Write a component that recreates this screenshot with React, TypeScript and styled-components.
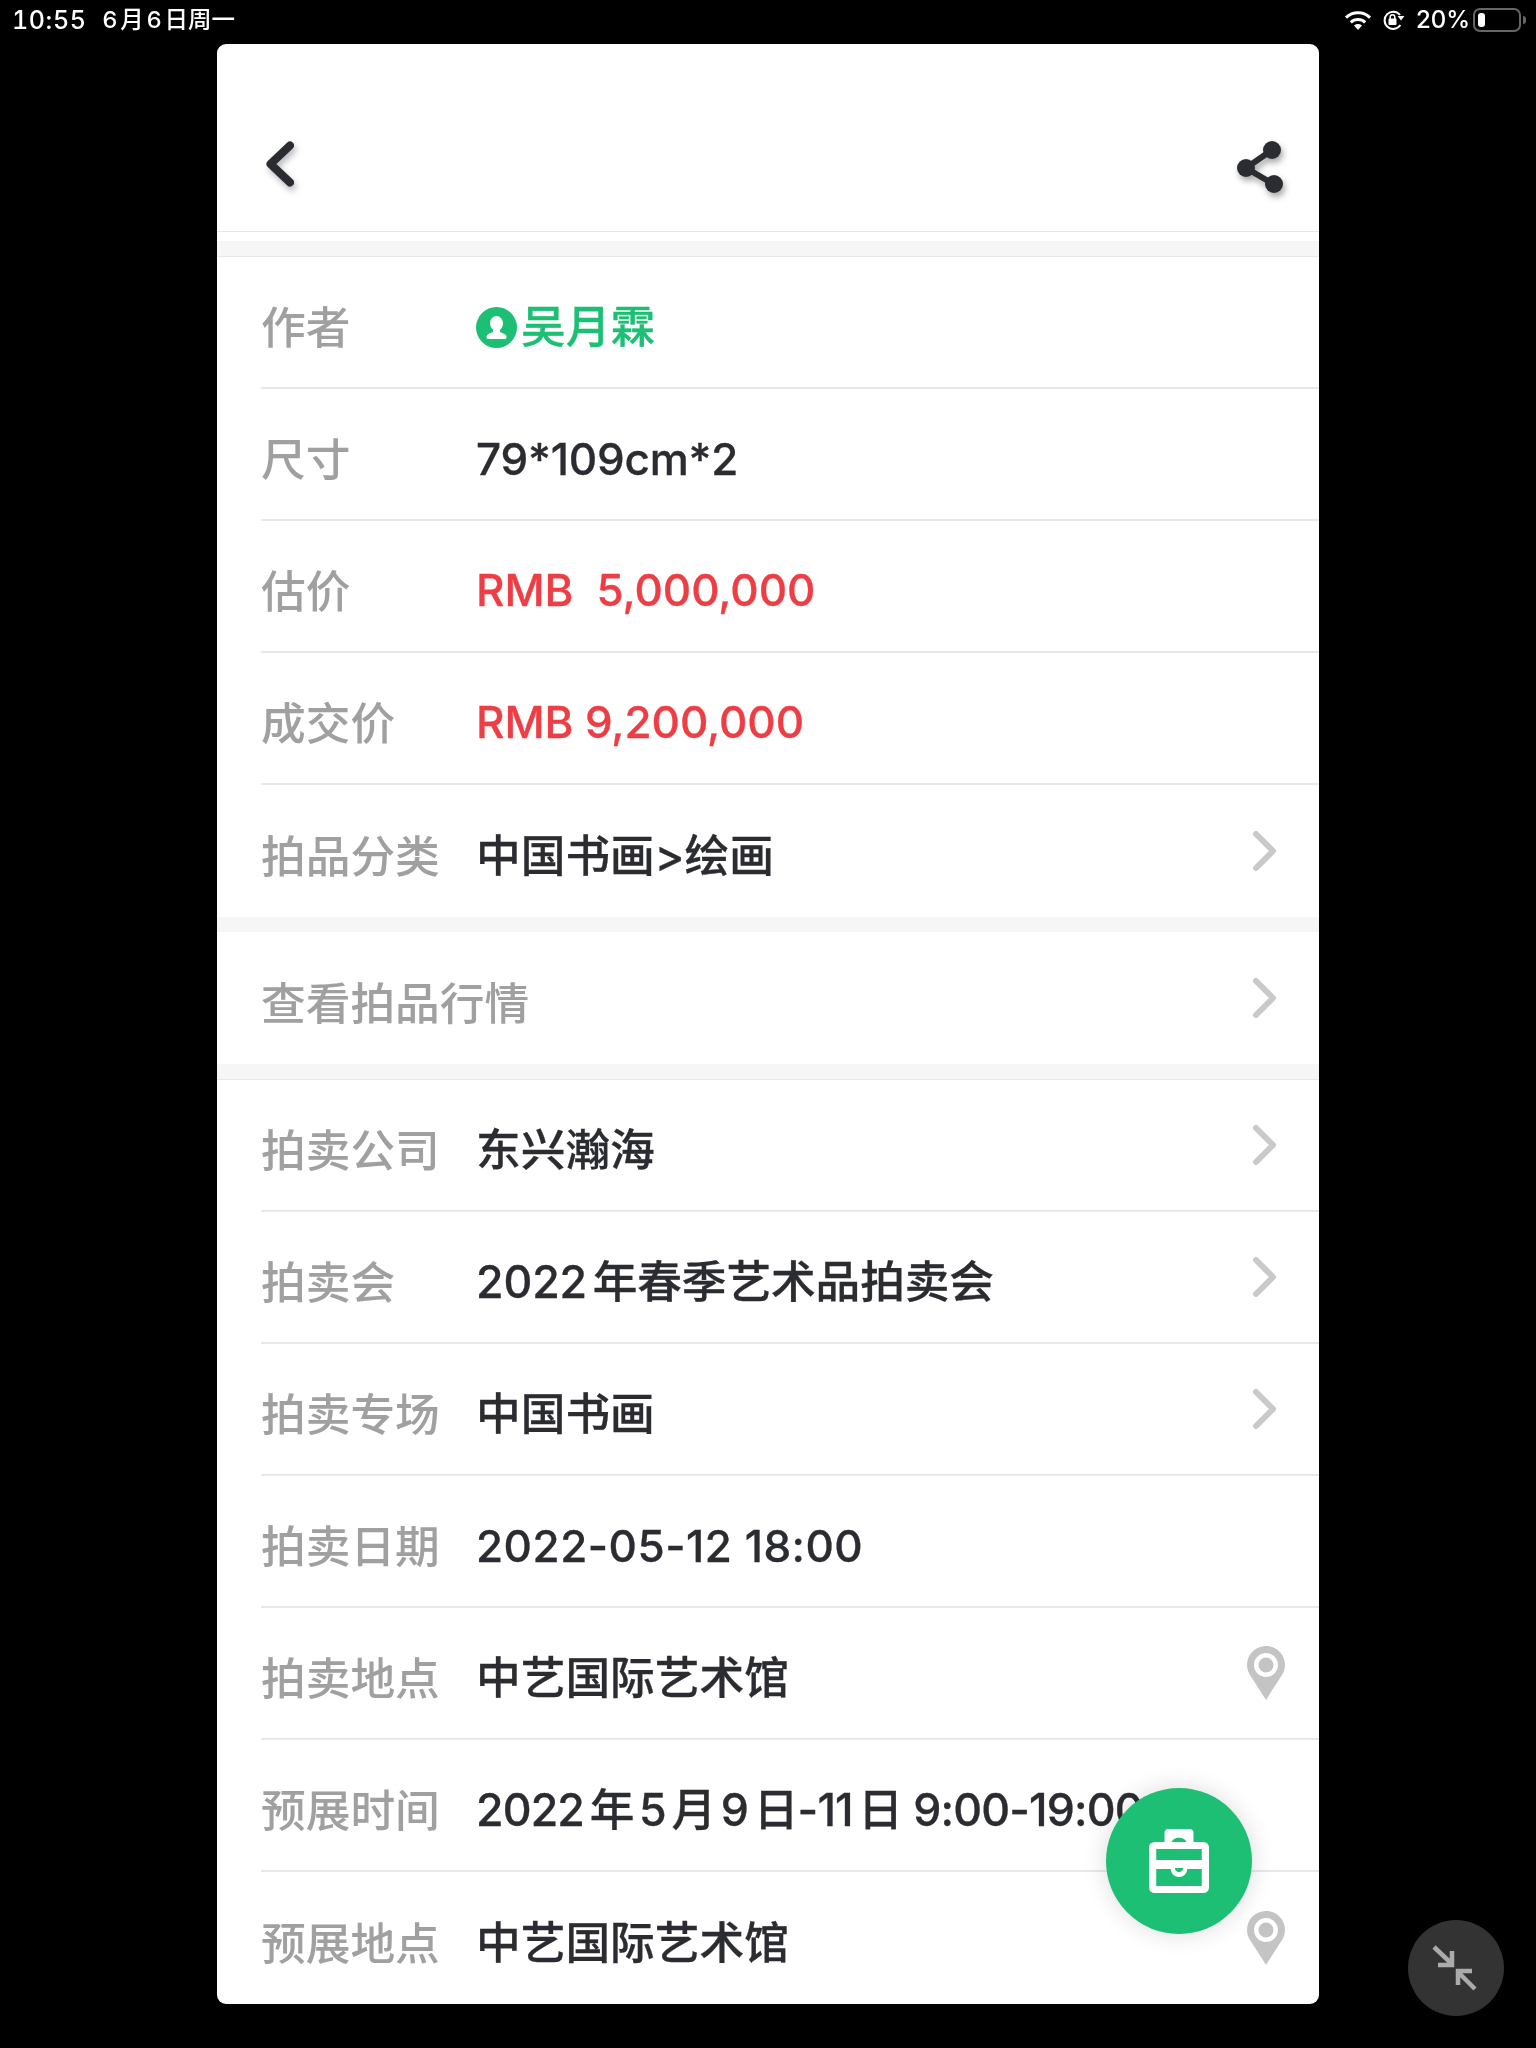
import React from "react";
import styled, { createGlobalStyle } from "styled-components";

const GlobalStyle = createGlobalStyle`
  html, body {
    margin: 0;
    padding: 0;
    background: #000;
  }
`;

type Tone = "dark" | "red" | "green";

type RowData = {
  label: string;
  value: string;
  tone?: Tone;
  action?: "chevron" | "pin";
  author?: boolean;
  latin?: boolean;
  tight?: number;
};

const firstGroup: RowData[] = [
  { label: "作者", value: "吴月霖", tone: "green", author: true },
  { label: "尺寸", value: "79*109cm*2", latin: true, tight: -0.2 },
  { label: "估价", value: "RMB  5,000,000", tone: "red", latin: true, tight: -0.1 },
  { label: "成交价", value: "RMB 9,200,000", tone: "red", latin: true, tight: -0.1 },
  { label: "拍品分类", value: "中国书画>绘画", action: "chevron" },
];

const saleGroup: RowData[] = [
  { label: "拍卖公司", value: "东兴瀚海", action: "chevron" },
  { label: "拍卖会", value: "2022年春季艺术品拍卖会", action: "chevron", tight: -0.1 },
  { label: "拍卖专场", value: "中国书画", action: "chevron" },
  { label: "拍卖日期", value: "2022-05-12 18:00", latin: true, tight: 0.5 },
  { label: "拍卖地点", value: "中艺国际艺术馆", action: "pin" },
  { label: "预展时间", value: "2022年5月9日-11日 9:00-19:00", tight: -0.85 },
  { label: "预展地点", value: "中艺国际艺术馆", action: "pin" },
];

const toneColors = {
  dark: "#2b2c31",
  red: "#ee3e45",
  green: "#1cbf73",
};

function ChevronIcon() {
  return (
    <svg width="26" height="42" viewBox="0 0 26 42">
      <path
        d="M4 4 L21 21 L4 38"
        fill="none"
        stroke="#c9c9c9"
        strokeWidth="6"
        strokeLinecap="round"
        strokeLinejoin="round"
      />
    </svg>
  );
}

function PinIcon() {
  return (
    <svg width="38" height="54" viewBox="0 0 38 54">
      <path
        fillRule="evenodd"
        fill="#c4c4c4"
        d="M19 0 C8.5 0 0 8.5 0 19 C0 24 2 28 5 32 L19 54 L33 32 C36 28 38 24 38 19 C38 8.5 29.5 0 19 0 Z M19 7 C25.6 7 31 12.4 31 19 C31 25.6 25.6 31 19 31 C12.4 31 7 25.6 7 19 C7 12.4 12.4 7 19 7 Z"
      />
      <circle cx="19" cy="19" r="7.5" fill="#c4c4c4" />
    </svg>
  );
}

function PersonBadge() {
  return (
    <svg width="41" height="41" viewBox="0 0 41 41">
      <circle cx="20.5" cy="20.5" r="20.5" fill="#1cbf73" />
      <ellipse cx="20.5" cy="16.5" rx="6.5" ry="7.5" fill="#fff" />
      <path
        d="M17 22 L17 25 C14 26.5 10.5 27 10.5 30 C10.5 31 11 32 12 32 L29 32 C30 32 30.5 31 30.5 30 C30.5 27 27 26.5 24 25 L24 22 Z"
        fill="#fff"
      />
    </svg>
  );
}

function InfoRow({ row }: { row: RowData }) {
  return (
    <Row>
      <Label>{row.label}</Label>
      {row.value && (
        <Value $tone={row.tone || "dark"} $latin={row.latin} $tight={row.tight}>
          {row.author && <PersonBadge />}
          <span>{row.value}</span>
        </Value>
      )}
      {row.action === "chevron" && (
        <ChevronSlot>
          <ChevronIcon />
        </ChevronSlot>
      )}
      {row.action === "pin" && (
        <PinSlot>
          <PinIcon />
        </PinSlot>
      )}
    </Row>
  );
}

export default function App() {
  return (
    <Page>
      <GlobalStyle />
      <StatusBar>
        <StatusText>
          <Clock>10:55</Clock>
          <span>6月6日周一</span>
        </StatusText>
        <StatusIcons>
          <svg width="28" height="20" viewBox="0 0 28 20">
            <path d="M14 20 L10 15.6 C12.2 13.6 15.8 13.6 18 15.6 Z" fill="#fff" />
            <path d="M6.8 12.4 C10.8 8.6 17.2 8.6 21.2 12.4" fill="none" stroke="#fff" strokeWidth="3" />
            <path d="M2 7.6 C8.6 1.2 19.4 1.2 26 7.6" fill="none" stroke="#fff" strokeWidth="3" />
          </svg>
          <svg width="23" height="20" viewBox="0 0 23 20">
            <path d="M18 5 A8.6 8.6 0 1 0 18.4 15" fill="none" stroke="#fff" strokeWidth="2" />
            <path d="M15.6 6 L22.4 6 L19 10.4 Z" fill="#fff" />
            <rect x="6.5" y="8.5" width="8" height="6.5" rx="1" fill="#fff" />
            <path d="M8.2 9 V7 A2.3 2.3 0 0 1 12.8 7 V9" fill="none" stroke="#fff" strokeWidth="1.5" />
          </svg>
          <Percent>20%</Percent>
          <Battery>
            <BatteryLevel />
          </Battery>
        </StatusIcons>
      </StatusBar>

      <Card>
        <Header>
          <BackIcon width="30" height="46" viewBox="0 0 30 46">
            <path
              d="M25 4.5 L5.5 23 L25 41.5"
              fill="none"
              stroke="#2b2c31"
              strokeWidth="8"
              strokeLinecap="round"
              strokeLinejoin="round"
            />
          </BackIcon>
          <ShareIcon width="46" height="52" viewBox="0 0 46 52">
            <path d="M35 9 L9 27 L38 44" fill="none" stroke="#2b2c31" strokeWidth="6" />
            <circle cx="35" cy="9" r="9" fill="#2b2c31" />
            <circle cx="9" cy="27" r="9" fill="#2b2c31" />
            <circle cx="37" cy="43" r="9" fill="#2b2c31" />
          </ShareIcon>
        </Header>
        <HeaderGap />

        <Group>
          {firstGroup.map((row) => (
            <InfoRow key={row.label} row={row} />
          ))}
        </Group>
        <SectionGap />
        <Group>
          <InfoRow row={{ label: "查看拍品行情", value: "", action: "chevron" }} />
        </Group>
        <SectionGap $lined />
        <Group>
          {saleGroup.map((row) => (
            <InfoRow key={row.label} row={row} />
          ))}
        </Group>

        <Fab>
          <svg width="60" height="64" viewBox="0 0 58 64" preserveAspectRatio="none">
            <rect x="15" y="0" width="28" height="16" rx="4" fill="#fff" />
            <path d="M21.5 14 C23 7 35 7 36.5 14 Z" fill="#1cbf73" />
            <rect x="3.5" y="16.5" width="51" height="44" rx="2" fill="none" stroke="#fff" strokeWidth="7" />
            <rect x="3" y="31" width="52" height="9" fill="#fff" />
            <circle cx="29" cy="40" r="8" fill="#fff" />
            <path d="M25 39 H33 C33 44.5 25 44.5 25 39 Z" fill="#1cbf73" />
          </svg>
        </Fab>
      </Card>

      <CollapseButton>
        <svg width="96" height="96" viewBox="0 0 96 96">
          <path d="M26 27 L44 44 M44 31 V45 H30" fill="none" stroke="#ababab" strokeWidth="4.5" />
          <path d="M67 69 L50 52 M50 65 V51 H64" fill="none" stroke="#ababab" strokeWidth="4.5" />
        </svg>
      </CollapseButton>
    </Page>
  );
}

const Page = styled.div`
  position: relative;
  width: 1536px;
  height: 2048px;
  overflow: hidden;
  background: #000;
  font-family: "Inter", "Noto Sans CJK SC", sans-serif;
  filter: blur(0.4px);
`;

const StatusBar = styled.div`
  display: flex;
  justify-content: space-between;
  align-items: flex-start;
  height: 44px;
  box-sizing: border-box;
  padding: 7px 15px 0 12px;
  color: #fff;
`;

const StatusText = styled.div`
  display: flex;
  gap: 16px;
  font-size: 23.5px;
  line-height: 26px;
  font-weight: 500;
  text-autospace: normal;
`;

const Clock = styled.span`
  font-size: 25px;
  font-feature-settings: "tnum";
  letter-spacing: 0.6px;
`;

const StatusIcons = styled.div`
  display: flex;
  align-items: center;
  gap: 10px;
  height: 26px;
`;

const Percent = styled.span`
  font-size: 24px;
  line-height: 26px;
  font-weight: 500;
  margin-left: 1px;
  margin-right: -7px;
`;

const Battery = styled.div`
  position: relative;
  width: 48px;
  height: 24px;
  box-sizing: border-box;
  border: 2px solid #666;
  border-radius: 7px;
  padding: 3px;

  &::after {
    content: "";
    position: absolute;
    right: -7px;
    top: 6px;
    width: 3px;
    height: 8px;
    border-radius: 0 3px 3px 0;
    background: #666;
  }
`;

const BatteryLevel = styled.div`
  width: 7px;
  height: 14px;
  border-radius: 3px;
  background: #fff;
`;

const Card = styled.div`
  position: relative;
  width: 1102px;
  height: 1960px;
  margin: 0 auto;
  overflow: hidden;
  background: #fff;
  border-radius: 9px;
`;

const Header = styled.div`
  display: flex;
  justify-content: space-between;
  align-items: flex-start;
  height: 188px;
  box-sizing: border-box;
  padding: 97px 36px 0 48px;
  border-bottom: 1px solid #e6e6e6;
`;

const BackIcon = styled.svg`
  filter: drop-shadow(2px 4px 3px rgba(0, 0, 0, 0.28));
`;

const ShareIcon = styled.svg`
  filter: drop-shadow(2px 4px 3px rgba(0, 0, 0, 0.35));
`;

const HeaderGap = styled.div`
  height: 15px;
  margin-top: 9px;
  background: #f6f6f6;
  border-bottom: 1px solid #e8e8e8;
`;

const SectionGap = styled.div<{ $lined?: boolean }>`
  height: 15px;
  background: #f6f6f6;
  border-bottom: ${(p) => (p.$lined ? "1px solid #e8e8e8" : "none")};
`;

const Row = styled.div`
  display: flex;
  align-items: center;
  height: 132px;
  box-sizing: border-box;
  padding-top: 6px;
  margin-left: 44px;
  border-bottom: 2px solid #e8e8e8;
`;

const Group = styled.div`
  & > ${Row}:last-child {
    border-bottom: none;
  }
`;

const Label = styled.div`
  flex: none;
  width: 215px;
  font-family: "Noto Sans CJK SC", sans-serif;
  font-size: 44.7px;
  line-height: 60px;
  font-weight: 500;
  color: #a0a0a0;
  white-space: nowrap;
`;

const Value = styled.div<{ $tone: Tone; $latin?: boolean; $tight?: number }>`
  display: flex;
  align-items: center;
  gap: 4px;
  margin-top: ${(p) => (p.$tone === "red" ? "1px" : "4px")};
  font-size: ${(p) => (p.$latin ? "44px" : "44.7px")};
  letter-spacing: ${(p) => p.$tight || 0}px;
  line-height: 60px;
  font-weight: 500;
  white-space: pre;
  text-autospace: normal;
  -webkit-text-stroke: 0.3px currentColor;
  color: ${(p) => toneColors[p.$tone]};
`;

const ChevronSlot = styled.div`
  display: flex;
  margin-left: auto;
  margin-right: 41px;
  margin-top: -6px;
`;

const PinSlot = styled.div`
  display: flex;
  margin-left: auto;
  margin-right: 34px;
  margin-top: -6px;
`;

const Fab = styled.div`
  position: absolute;
  left: 889px;
  top: 1744px;
  width: 146px;
  height: 146px;
  border-radius: 50%;
  display: flex;
  align-items: center;
  justify-content: center;
  background: #1cbf73;
  box-shadow: 0 0 24px rgba(0, 0, 0, 0.14);
`;

const CollapseButton = styled.div`
  position: absolute;
  left: 1408px;
  top: 1920px;
  width: 96px;
  height: 96px;
  border-radius: 50%;
  background: #333;
`;
